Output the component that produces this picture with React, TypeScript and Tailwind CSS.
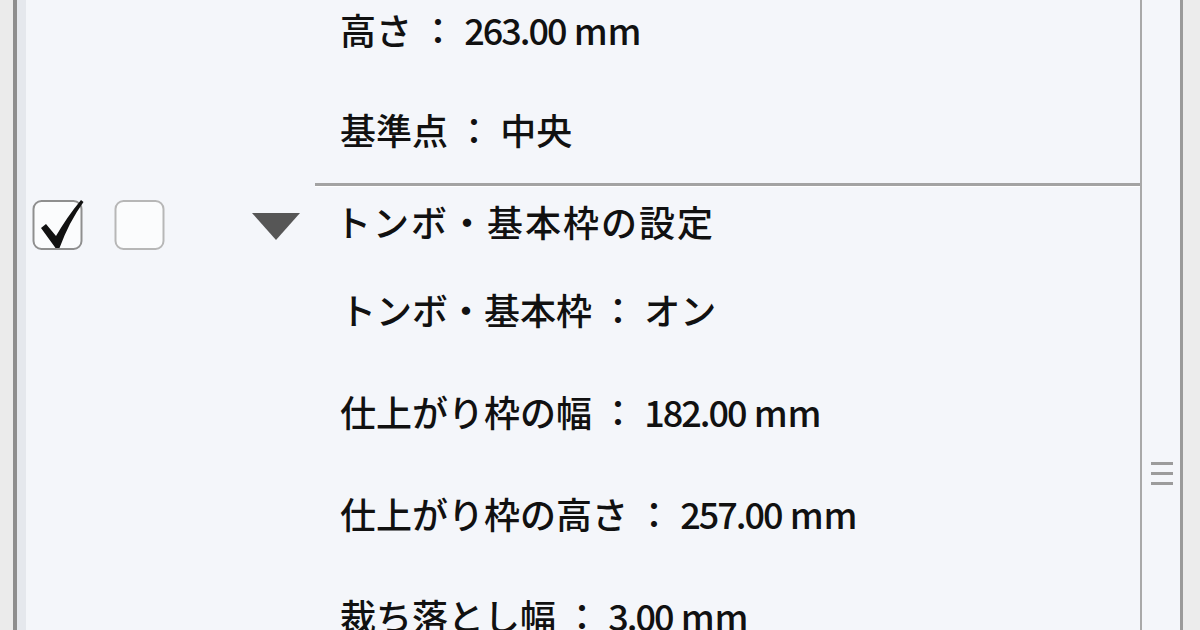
import React from 'react';

const FONT = { fontFamily: '"Noto Sans CJK JP", "Noto Sans", sans-serif' };

type Row = { label: string; value: string; unit?: string };

const upperRows: Row[] = [
    { label: '高さ', value: '263.00', unit: 'mm' },
    { label: '基準点', value: '中央' },
];

const tomboRows: Row[] = [
    { label: 'トンボ・基本枠', value: 'オン' },
    { label: '仕上がり枠の幅', value: '182.00', unit: 'mm' },
    { label: '仕上がり枠の高さ', value: '257.00', unit: 'mm' },
    { label: '裁ち落とし幅', value: '3.00', unit: 'mm' },
];

const CheckBox: React.FC<{ checked?: boolean }> = ({ checked }) => (
    <svg width="52" height="52" viewBox="0 0 52 52" className="shrink-0">
        <rect
            x="1.5"
            y="2"
            width="48"
            height="48"
            rx="8"
            fill="#fbfcfd"
            stroke={checked ? '#8f8f8f' : '#b7b7b7'}
            strokeWidth="2"
        />
        {checked && (
            <path
                d="M9 29 L14 25 L24 37 Q35 18 49 1 L51.5 3 Q37 23 27.5 49 L23.5 49 Z"
                fill="#111"
            />
        )}
    </svg>
);

const PropRow: React.FC<{ row: Row; h: string }> = ({ row, h }) => {
    const numeric = row.unit !== undefined;
    return (
        <div className={`${h} flex items-center text-[36px] leading-none whitespace-pre font-medium`}>
            <span>{row.label}</span>
            <span> ： </span>
            <span className={numeric ? 'tracking-[-2px]' : ''}>{row.value}</span>
            {row.unit && <span> {row.unit}</span>}
        </div>
    );
};

export default function App() {
    return (
        <div className="w-[1200px] h-[630px] overflow-hidden flex bg-[#f4f6fa] text-[#111]" style={FONT}>
            {/* left frame */}
            <div className="w-[13px] shrink-0 bg-[#ebebeb]" />
            <div className="w-[4px] shrink-0 bg-[#8e8e8e]" />
            <div className="w-[9px] shrink-0 bg-[#e5e8ed]" />

            {/* list */}
            <div className="flex-1">
                <div className="-mt-[21px] pl-[314px]">
                    {upperRows.map((r) => (
                        <PropRow key={r.label} row={r} h="h-[100px]" />
                    ))}
                </div>

                <div className="mt-[4px] ml-[289px] h-[3px] bg-[#a3a3a3]" />
                <div className="ml-[289px] h-px bg-[#ffffff]" />

                <div className="h-[71px] flex items-center">
                    <div className="ml-[6px] mt-[4px]">
                        <CheckBox checked />
                    </div>
                    <div className="ml-[30px] mt-[4px]">
                        <CheckBox />
                    </div>
                    <svg width="48" height="27" viewBox="0 0 48 27" className="ml-[86px] mt-[8px] shrink-0">
                        <polygon points="0,0 48,0 24,27" fill="#565656" />
                    </svg>
                    <div className="ml-[35px] -mt-[4px] text-[36px] leading-none whitespace-pre font-medium tracking-[2px]">
                        トンボ・基本枠の設定
                    </div>
                </div>

                <div className="pl-[314px]">
                    {tomboRows.map((r) => (
                        <PropRow key={r.label} row={r} h="h-[102px]" />
                    ))}
                </div>
            </div>

            {/* scrollbar */}
            <div className="w-[2px] shrink-0 bg-[#a9a9a9]" />
            <div className="w-[38px] shrink-0 pt-[462px] flex justify-center">
                <div className="flex flex-col gap-[7px] ml-[2px]">
                    <div className="w-[22px] h-[3px] bg-[#9c9c9c]" />
                    <div className="w-[22px] h-[3px] bg-[#9c9c9c]" />
                    <div className="w-[22px] h-[3px] bg-[#9c9c9c]" />
                </div>
            </div>
            <div className="w-[3px] shrink-0 bg-[#9a9a9a]" />
            <div className="w-[17px] shrink-0 bg-[#ececec]" />
        </div>
    );
}
